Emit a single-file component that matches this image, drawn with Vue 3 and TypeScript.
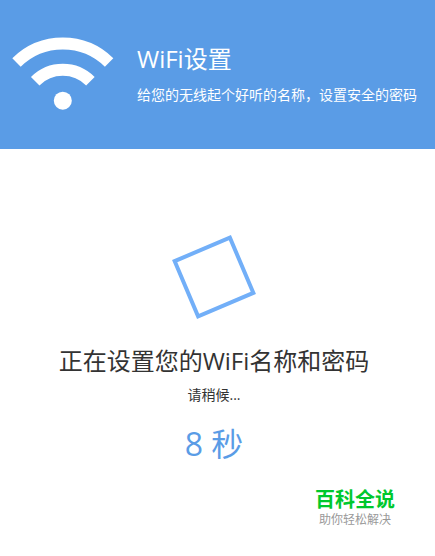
<script setup lang="ts">
import { ref } from 'vue'

const seconds = ref<number>(8)
</script>

<template>
  <div class="page">
    <header class="banner">
      <svg class="wifi" viewBox="0 0 102 74" aria-hidden="true">
        <path d="M4.5 25.5A66 66 0 0 1 97.1 25.5" />
        <path d="M23.2 44.3A39 39 0 0 1 78.4 44.3" />
        <circle cx="50.8" cy="63.7" r="9" />
      </svg>
      <div class="intro">
        <h1>WiFi设置</h1>
        <p>给您的无线起个好听的名称，设置安全的密码</p>
      </div>
    </header>
    <main class="progress">
      <div class="spinner"></div>
      <h2>正在设置您的WiFi名称和密码</h2>
      <p class="wait">请稍候...</p>
      <p class="count">{{ seconds }} 秒</p>
    </main>
    <footer class="brand">
      <strong>百科全说</strong>
      <span>助你轻松解决</span>
    </footer>
  </div>
</template>

<style>
body {
  margin: 0;
  background: #fff;
}
</style>

<style scoped>
.page {
  font-family: "Open Sans", "Noto Sans CJK SC", sans-serif;
  color: #333;
}
h1,
h2,
p {
  margin: 0;
  font-weight: 400;
}
.banner {
  display: flex;
  align-items: flex-start;
  gap: 23px;
  padding: 37px 12px 38px;
  background: #5a9ce6;
  color: #fff;
}
.wifi {
  flex: none;
  width: 102px;
  height: 74px;
}
.wifi path {
  fill: none;
  stroke: #fff;
  stroke-width: 12;
}
.wifi circle {
  fill: #fff;
}
.intro {
  padding-top: 4px;
  white-space: nowrap;
}
h1 {
  font-size: 24px;
  line-height: 36px;
}
.intro p {
  padding-top: 8px;
  font-size: 14px;
  line-height: 20px;
}
.progress {
  display: flex;
  flex-direction: column;
  align-items: center;
  padding: 96px 7px 0 0;
  text-align: center;
}
.spinner {
  box-sizing: border-box;
  width: 64px;
  height: 64px;
  border: 4px solid #72aff8;
  transform: rotate(-23deg);
}
h2 {
  padding-top: 34px;
  font-size: 24px;
  line-height: 36px;
}
.wait {
  padding-top: 6px;
  font-size: 14px;
  line-height: 20px;
}
.count {
  padding-top: 15px;
  color: #5a9ce6;
  font-size: 32px;
  line-height: 48px;
}
.brand {
  display: flex;
  flex-direction: column;
  align-items: center;
  width: fit-content;
  margin-left: auto;
  padding: 20px 40px 18px 0;
  font-family: "Liberation Sans", "Noto Sans CJK SC", sans-serif;
}
.brand strong {
  color: #00c82d;
  font-size: 20px;
  font-weight: 700;
  line-height: 24px;
}
.brand span {
  color: #999;
  font-size: 12px;
  line-height: 16px;
}
</style>
